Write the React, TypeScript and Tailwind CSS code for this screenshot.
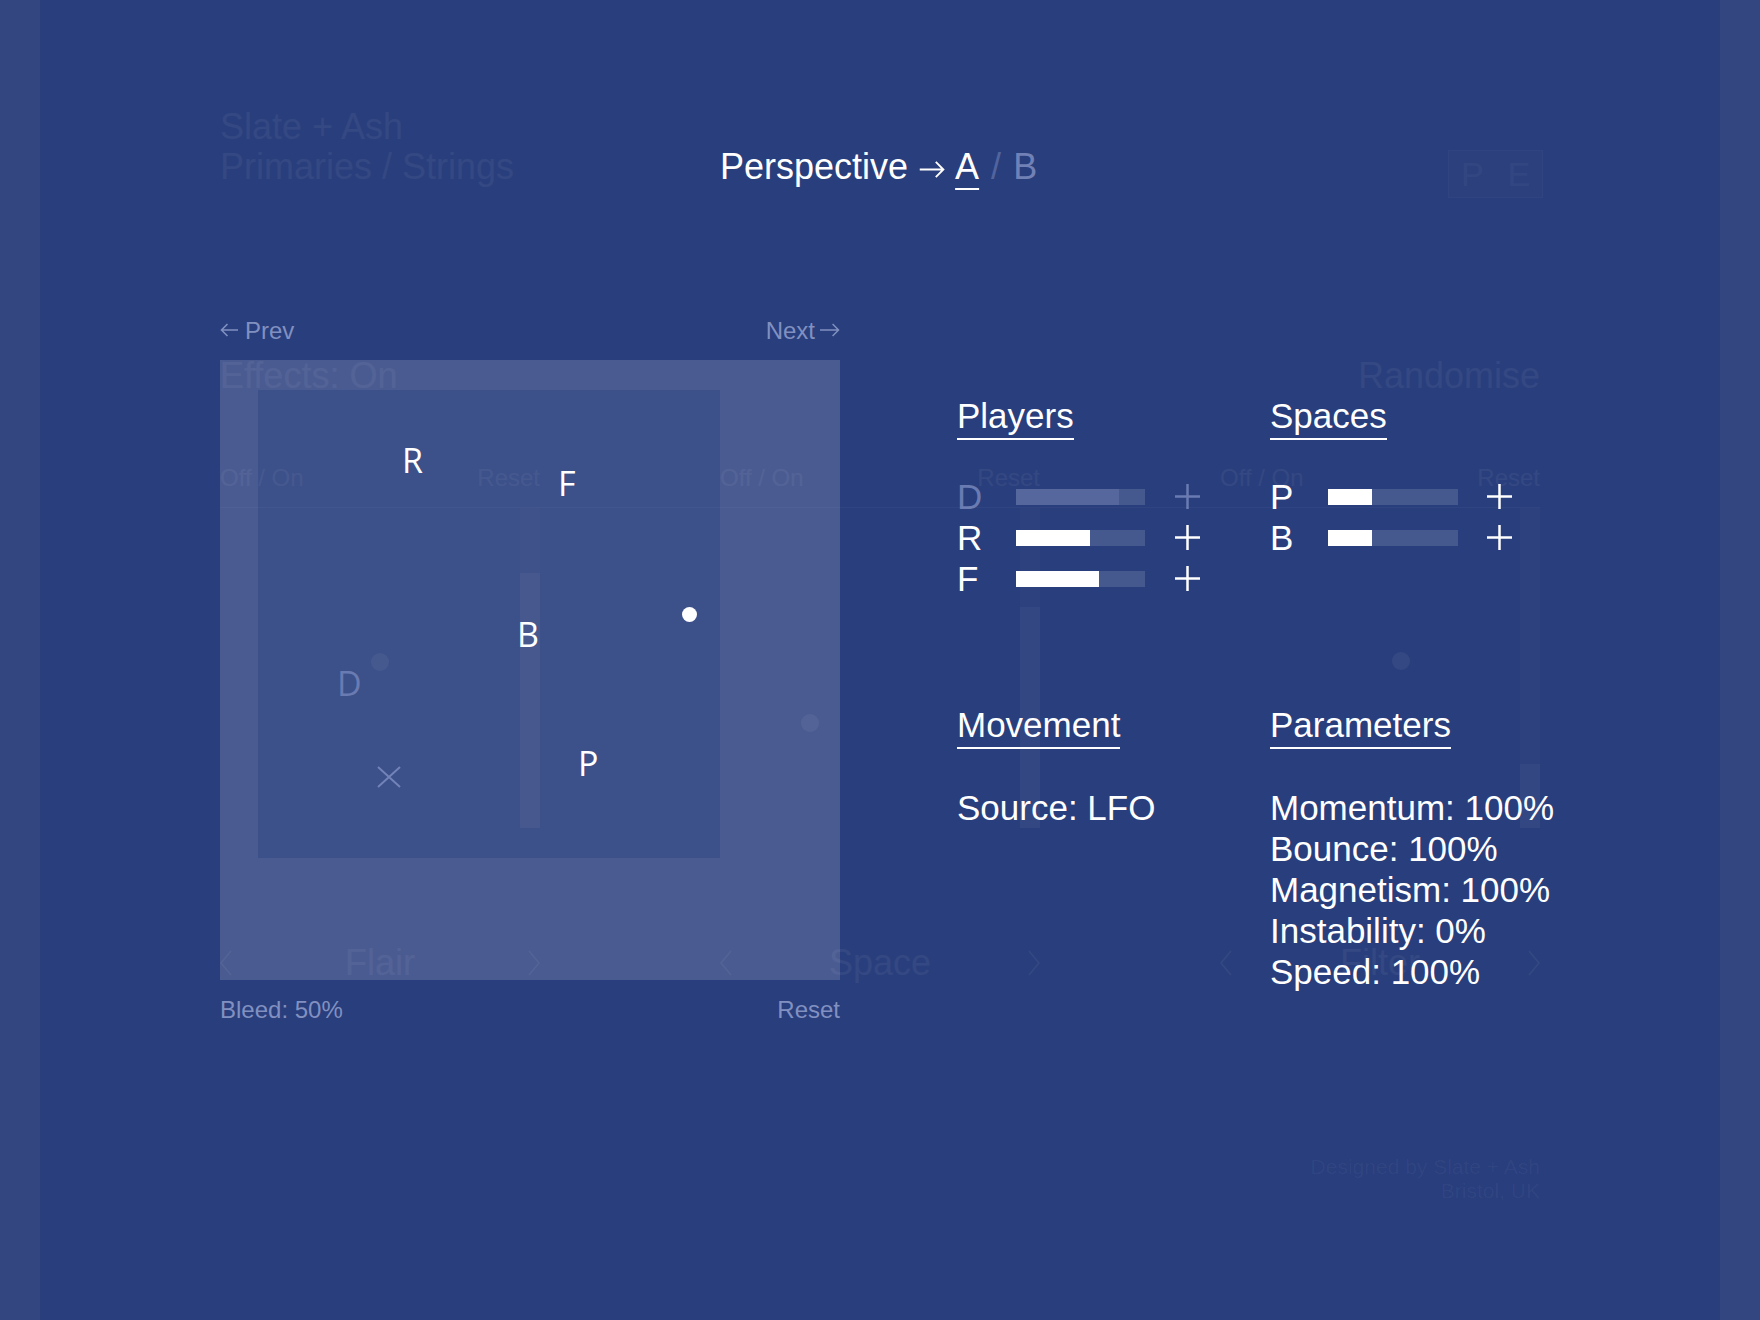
import React from "react";

const players = [
  { key: "D", value: 80, muted: true },
  { key: "R", value: 57, muted: false },
  { key: "F", value: 64, muted: false },
];

const spaces = [
  { key: "P", value: 34 },
  { key: "B", value: 34 },
];

const params = ["Momentum: 100%", "Bounce: 100%", "Magnetism: 100%", "Instability: 0%", "Speed: 100%"];

function Plus({ muted }: { muted?: boolean }) {
  return (
    <svg width="27" height="27" viewBox="0 0 27 27" className={muted ? "text-[#6a7bb2]" : "text-white"}>
      <path d="M13.5 1 V26 M1 13.5 H26" stroke="currentColor" strokeWidth="2.5" fill="none" />
    </svg>
  );
}

function ArrowRight({ className }: { className?: string }) {
  return (
    <svg viewBox="0 0 27 18" fill="none" className={className}>
      <path d="M0 9 H25 M17 1 L25 9 L17 17" stroke="currentColor" strokeWidth="2" />
    </svg>
  );
}

function ArrowLeft({ className }: { className?: string }) {
  return (
    <svg viewBox="0 0 18 14" fill="none" className={className}>
      <path d="M18 7 H1.5 M7.5 1 L1.5 7 L7.5 13" stroke="currentColor" strokeWidth="1.6" />
    </svg>
  );
}

function Chevron({ dir }: { dir: "l" | "r" }) {
  return (
    <svg width="12" height="26" viewBox="0 0 12 26" fill="none">
      <path d={dir === "l" ? "M11 1 L1 13 L11 25" : "M1 1 L11 13 L1 25"} stroke="currentColor" strokeWidth="1.5" />
    </svg>
  );
}

function Bar({ value, width, muted }: { value: number; width: string; muted?: boolean }) {
  return (
    <div className={`relative h-[16px] bg-[#46598f] ${width}`}>
      <div
        className={`absolute inset-y-0 left-0 ${muted ? "bg-[#56679d]" : "bg-white"}`}
        style={{ width: `${value}%` }}
      />
    </div>
  );
}

// faint layer of another screen that shows through
function Ghost() {
  const cols = [
    { fill: 65, knob: "left-[151px] top-[145px]" },
    { fill: 99, knob: "left-[81px] top-[206px]" },
    { fill: 256, knob: "left-[172px] top-[144px]" },
  ];
  return (
    <div className="pointer-events-none absolute inset-0 px-[180px] pt-[150px] text-white/[0.05]">
      <div className="flex justify-end">
        <div className="mr-[-3px] flex h-[48px] w-[95px] items-center justify-around border border-white/[0.025] bg-white/[0.012] text-[34px] text-white/[0.035]">
          <span>P</span>
          <span>E</span>
        </div>
      </div>
      <div className="mt-[158px] flex justify-between text-[36px] leading-[40px]">
        <span>Effects: On</span>
        <span>Randomise</span>
      </div>
      <div className="mt-[68px] grid grid-cols-3 gap-x-[180px] text-[24px] leading-[28px]">
        {cols.map((_, i) => (
          <div key={i} className="flex justify-between">
            <span>Off / On</span>
            <span>Reset</span>
          </div>
        ))}
      </div>
      <div className="mt-[15px] grid grid-cols-3 gap-x-[180px] border-t border-white/[0.03]">
        {cols.map((c, i) => (
          <div key={i} className="relative h-[320px]">
            <div className="absolute right-0 top-0 h-full w-[20px] bg-white/[0.015]" />
            <div className="absolute bottom-0 right-0 w-[20px] bg-white/[0.035]" style={{ top: c.fill }} />
            <div className={`absolute h-[18px] w-[18px] rounded-full bg-white/[0.05] ${c.knob}`} />
          </div>
        ))}
      </div>
      <div className="mt-[115px] grid grid-cols-3 gap-x-[180px] text-[36px] leading-[40px]">
        {["Flair", "Space", "Filter"].map((t) => (
          <div key={t} className="flex items-center justify-between">
            <Chevron dir="l" />
            <span>{t}</span>
            <Chevron dir="r" />
          </div>
        ))}
      </div>
      <div className="mt-[172px] text-right text-[21px] leading-[24px] text-white/[0.04]">
        <div>Designed by Slate + Ash</div>
        <div>Bristol, UK</div>
      </div>
    </div>
  );
}

function Heading({ children }: { children: React.ReactNode }) {
  return <h2 className="w-fit border-b-2 border-white pb-[5px] leading-[34px]">{children}</h2>;
}

export default function App() {
  return (
    <div className="flex h-[1320px] w-full overflow-hidden bg-[#293e7c] font-['Liberation_Sans',Arial,sans-serif] text-white">
      <div className="w-[40px] shrink-0 bg-[#34467f]" />
      <main className="relative min-w-0 flex-1 px-[180px] pt-[107px]">
        {/* header */}
        <header className="flex items-end text-[36px] leading-[40px]">
          <div className="w-[500px] shrink-0 text-white/[0.05]">
            <div>Slate + Ash</div>
            <div>Primaries / Strings</div>
          </div>
          <div className="h-[40px] whitespace-nowrap">
            Perspective
            <ArrowRight className="ml-[11px] mr-[9px] inline-block h-[17px] w-[27px] align-[1px]" />
            <span className="underline decoration-2 underline-offset-[9px]">A</span>
            <span className="mx-[2px] text-[#52649e]"> / </span>
            <span className="text-[#7181b6]">B</span>
          </div>
        </header>

        {/* body */}
        <section className="mt-[130px] flex">
          <div className="w-[620px] shrink-0">
            <div className="flex justify-between text-[24px] leading-[28px] text-[#8190c0]">
              <span className="flex items-center gap-[7px]">
                <ArrowLeft className="mt-[-3px] h-[14px] w-[18px]" />
                Prev
              </span>
              <span className="flex items-center gap-[5px]">
                Next
                <ArrowRight className="mt-[-3px] h-[14px] w-[20px]" />
              </span>
            </div>

            <div className="relative mt-[15px] h-[620px] bg-[#4a5b91] pl-[38px] pt-[30px]">
              <div className="h-[468px] w-[462px] bg-[#3c5089]" />
              <div className="font-['Open_Sans',sans-serif] text-[34px] leading-none">
                <span className="absolute left-[182px] top-[83px]">R</span>
                <span className="absolute left-[338px] top-[106px]">F</span>
                <span className="absolute left-[297px] top-[257px]">B</span>
                <span className="absolute left-[117px] top-[306px] text-[#6a7bb2]">D</span>
                <span className="absolute left-[358px] top-[386px]">P</span>
              </div>
              <svg className="absolute left-[157px] top-[406px] text-[#7383b8]" width="24" height="22" viewBox="0 0 24 22">
                <path d="M1 1 L23 21 M23 1 L1 21" stroke="currentColor" strokeWidth="2" fill="none" />
              </svg>
              <div className="absolute left-[462px] top-[247px] h-[15px] w-[15px] rounded-full bg-white" />
            </div>

            <div className="mt-[16px] flex justify-between text-[24px] leading-[28px] text-[#8190c0]">
              <span>Bleed: 50%</span>
              <span>Reset</span>
            </div>
          </div>

          <div className="ml-[117px] grid grid-cols-[313px_auto] content-start gap-y-[109px] pt-[82px] text-[35px] leading-[41px]">
            <div>
              <Heading>Players</Heading>
              <div className="mt-[36px]">
                {players.map((p) => (
                  <div key={p.key} className="flex h-[41px] items-center">
                    <span className={`w-[59px] ${p.muted ? "text-[#6a7bb2]" : ""}`}>{p.key}</span>
                    <Bar value={p.value} width="w-[129px]" muted={p.muted} />
                    <div className="ml-[29px]">
                      <Plus muted={p.muted} />
                    </div>
                  </div>
                ))}
              </div>
            </div>

            <div>
              <Heading>Spaces</Heading>
              <div className="mt-[36px]">
                {spaces.map((s) => (
                  <div key={s.key} className="flex h-[41px] items-center">
                    <span className="w-[58px]">{s.key}</span>
                    <Bar value={s.value} width="w-[130px]" />
                    <div className="ml-[28px]">
                      <Plus />
                    </div>
                  </div>
                ))}
              </div>
            </div>

            <div>
              <Heading>Movement</Heading>
              <div className="mt-[38px]">Source: LFO</div>
            </div>

            <div>
              <Heading>Parameters</Heading>
              <div className="mt-[38px] whitespace-nowrap">
                {params.map((p) => (
                  <div key={p}>{p}</div>
                ))}
              </div>
            </div>
          </div>
        </section>

        <Ghost />
      </main>
      <div className="w-[40px] shrink-0 bg-[#34467f]" />
    </div>
  );
}
